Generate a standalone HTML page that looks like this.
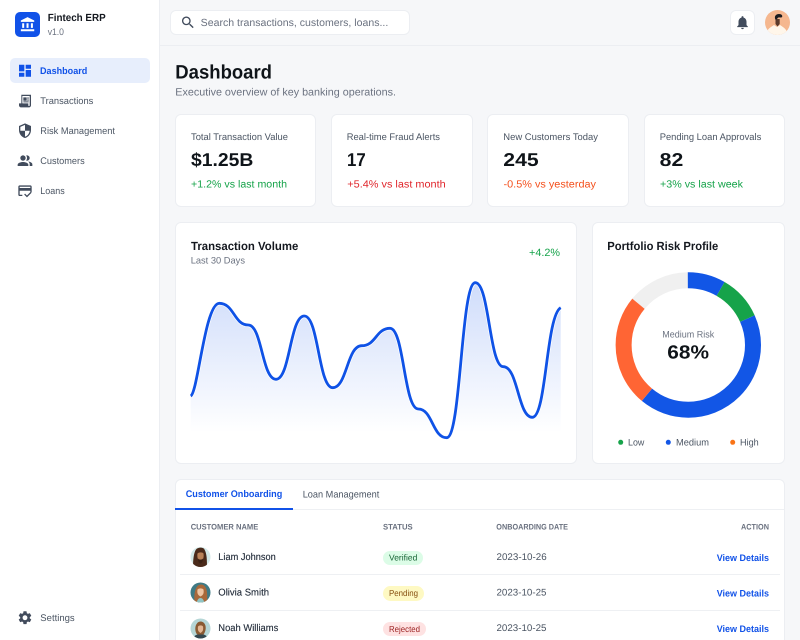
<!DOCTYPE html>
<html lang="en"><head><meta charset="utf-8"><title>Fintech ERP Dashboard</title>
<style>
html,body{margin:0;padding:0;width:800px;height:640px;overflow:hidden;background:#f6f7f9;font-family:"Liberation Sans",sans-serif}
#app{position:relative;width:800px;height:640px;overflow:hidden;background:#f6f7f9}
.b{position:absolute;box-sizing:border-box;background:#fff;border:1px solid #eceef2;border-radius:6px}
svg{position:absolute;left:0;top:0}
text{font-family:"Liberation Sans",sans-serif;font-size:9.5px;fill:#4b5563;text-rendering:geometricPrecision}
.bd{font-weight:700}
.n{font-size:9.6px}
.l{font-size:9.6px;fill:#4b5563}
.v{font-size:18.6px;font-weight:700;fill:#0f1419}
.d{font-size:10.4px}
.g{fill:#16a34a}.r{fill:#e0262c}.o{fill:#f4511e}.bl{fill:#1152e8}
.h{font-size:11.8px;font-weight:700;fill:#14181f}
.th{font-size:8px;font-weight:700;fill:#6b7280}
.nm{fill:#1f2937;font-size:9.8px;stroke:#1f2937;stroke-width:.12}
.bg{font-size:8.6px}
.gr{fill:#6b7280}
.ic{fill:#414b5c}
</style></head><body>
<div id="app">
<div class="b" style="left:-2px;top:-2px;width:162px;height:644px;border-radius:0"></div>
<div style="position:absolute;left:160px;top:45px;width:640px;height:1px;background:#eceef2"></div>
<div style="position:absolute;left:10px;top:58px;width:139.5px;height:25px;border-radius:5px;background:#e7eefc"></div>
<div style="position:absolute;left:15px;top:12px;width:25px;height:25px;border-radius:5px;background:#1152e8"></div>
<div class="b" style="left:170px;top:10px;width:240px;height:25px"></div>
<div class="b" style="left:730px;top:10px;width:25px;height:25px"></div>
<div class="b" style="left:175px;top:114px;width:141px;height:93px"></div>
<div class="b" style="left:331px;top:114px;width:142px;height:93px"></div>
<div class="b" style="left:487px;top:114px;width:142px;height:93px"></div>
<div class="b" style="left:643.5px;top:114px;width:141.5px;height:93px"></div>
<div class="b" style="left:175px;top:222px;width:402px;height:242px"></div>
<div class="b" style="left:592px;top:222px;width:193px;height:242px"></div>
<div class="b" style="left:175px;top:479px;width:610px;height:170px"></div>
<div style="position:absolute;left:176px;top:508.5px;width:608px;height:1px;background:#eef0f3"></div>
<div style="position:absolute;left:175px;top:507.5px;width:118px;height:2px;background:#1152e8"></div>
<div style="position:absolute;left:180px;top:574px;width:600px;height:1px;background:#eef0f3"></div>
<div style="position:absolute;left:180px;top:610px;width:600px;height:1px;background:#eef0f3"></div>
<div style="position:absolute;left:382.5px;top:550.5px;width:40.5px;height:14.5px;border-radius:8px;background:#dcfce7"></div>
<div style="position:absolute;left:382.5px;top:586px;width:41px;height:14.5px;border-radius:8px;background:#fef9c3"></div>
<div style="position:absolute;left:382.5px;top:621.5px;width:43.5px;height:14.5px;border-radius:8px;background:#fee2e2"></div>

<svg width="800" height="640" viewBox="0 0 800 640">
<defs>
<linearGradient id="fg" gradientUnits="userSpaceOnUse" x1="0" y1="283" x2="0" y2="433"><stop offset="0" stop-color="#1152e8" stop-opacity=".2"/><stop offset="1" stop-color="#1152e8" stop-opacity="0"/></linearGradient>
<clipPath id="c1"><circle cx="200.5" cy="557" r="10"/></clipPath>
<clipPath id="c2"><circle cx="200.5" cy="592.5" r="10"/></clipPath>
<clipPath id="c3"><circle cx="200.5" cy="628.5" r="10"/></clipPath>
<clipPath id="c4"><circle cx="777.5" cy="22.5" r="12.5"/></clipPath>
</defs>

<!-- sidebar -->
<g transform="translate(19.5,16.5)" fill="#fff"><path d="M4 10h3v7H4zM10.5 10h3v7h-3zM2 19h20v3H2zM17 10h3v7h-3zM12 1 2 6v2h20V6z" transform="scale(.67)"/></g>
<text x="47.7" y="20.8" class="bd" style="font-size:10.4px;fill:#14181f" lengthAdjust="spacingAndGlyphs" textLength="58">Fintech ERP</text>
<text x="47.7" y="35" class="gr" lengthAdjust="spacingAndGlyphs" textLength="16.3">v1.0</text>

<g transform="translate(17,62.7) scale(.667)" fill="#1152e8"><path d="M3 13h8V3H3v10zm0 8h8v-6H3v6zm10 0h8V11h-8v10zm0-18v6h8V3h-8z"/></g>
<g transform="translate(17,92.7) scale(.667)" class="ic"><path d="M19.5 3H6.5v13H3v3c0 1.66 1.34 3 3 3h12c1.66 0 3-1.34 3-3V3zM19 19c0 .55-.45 1-1 1s-1-.45-1-1v-3H8V5h11v14zM9.5 7h5v5h-5zM15.5 7h2v2h-2zM15.5 10h2v2h-2zM9.5 13h8v1.5h-8z"/></g>
<g transform="translate(17,122.7) scale(.667)" class="ic"><path d="M12 1 3 5v6c0 5.55 3.84 10.74 9 12 5.16-1.26 9-6.45 9-12V5l-9-4zm0 10.99h7c-.53 4.12-3.28 7.79-7 8.94V12H5V6.3l7-3.11v8.8z"/></g>
<g transform="translate(17,152.7) scale(.667)" class="ic"><path d="M16.67 13.13C18.04 14.06 19 15.32 19 17v3h4v-3c0-2.18-3.57-3.47-6.33-3.87zM15 12c2.21 0 4-1.79 4-4s-1.79-4-4-4c-.47 0-.91.1-1.33.26C14.5 5.3 15 6.6 15 8s-.5 2.7-1.33 3.74c.42.16.86.26 1.33.26zM9 12c2.21 0 4-1.79 4-4s-1.79-4-4-4-4 1.79-4 4 1.79 4 4 4zm0 2c-2.67 0-8 1.34-8 4v2h16v-2c0-2.66-5.33-4-8-4z"/></g>
<g transform="translate(17,182.7) scale(.667)" class="ic"><path d="M20 4H4c-1.11 0-2 .89-2 2v12c0 1.11.89 2 2 2h4v-2H4v-6h16v2h2V6c0-1.11-.89-2-2-2zm0 4H4V6h16v2zm-5.07 11.17-2.83-2.83-1.41 1.41L14.93 22 22 14.93l-1.41-1.41-5.66 5.65z"/></g>
<g transform="translate(17,609.7) scale(.667)" class="ic"><path d="M19.14 12.94c.04-.3.06-.61.06-.94 0-.32-.02-.64-.07-.94l2.03-1.58c.18-.14.23-.41.12-.61l-1.92-3.32c-.12-.22-.37-.29-.59-.22l-2.39.96c-.5-.38-1.03-.7-1.62-.94l-.36-2.54c-.04-.24-.24-.41-.48-.41h-3.84c-.24 0-.43.17-.47.41l-.36 2.54c-.59.24-1.13.57-1.62.94l-2.39-.96c-.22-.08-.47 0-.59.22L2.74 8.87c-.12.21-.08.47.12.61l2.03 1.58c-.05.3-.09.63-.09.94s.02.64.07.94l-2.03 1.58c-.18.14-.23.41-.12.61l1.92 3.32c.12.22.37.29.59.22l2.39-.96c.5.38 1.03.7 1.62.94l.36 2.54c.05.24.24.41.48.41h3.84c.24 0 .44-.17.47-.41l.36-2.54c.59-.24 1.13-.56 1.62-.94l2.39.96c.22.08.47 0 .59-.22l1.92-3.32c.12-.22.07-.47-.12-.61l-2.01-1.58zM12 15.6c-1.98 0-3.6-1.62-3.6-3.6s1.62-3.6 3.6-3.6 3.6 1.62 3.6 3.6-1.62 3.6-3.6 3.6z"/></g>
<text x="40" y="74" class="n bd bl" lengthAdjust="spacingAndGlyphs" textLength="47.3">Dashboard</text>
<text x="40.3" y="104" class="n" lengthAdjust="spacingAndGlyphs" textLength="53">Transactions</text>
<text x="40.3" y="134" class="n" lengthAdjust="spacingAndGlyphs" textLength="74.7">Risk Management</text>
<text x="40.3" y="164" class="n" lengthAdjust="spacingAndGlyphs" textLength="44.4">Customers</text>
<text x="40.3" y="194" class="n" lengthAdjust="spacingAndGlyphs" textLength="24.4">Loans</text>
<text x="40.3" y="621" class="n" lengthAdjust="spacingAndGlyphs" textLength="34.4">Settings</text>

<!-- header -->
<g transform="translate(180,14.5) scale(.667)" class="ic"><path d="M15.5 14h-.79l-.28-.27C15.41 12.59 16 11.11 16 9.5 16 5.91 13.09 3 9.5 3S3 5.91 3 9.5 5.91 16 9.5 16c1.61 0 3.09-.59 4.23-1.57l.27.28v.79l5 4.99L20.49 19l-4.99-5zm-6 0C7.01 14 5 11.99 5 9.5S7.01 5 9.5 5 14 7.01 14 9.5 11.99 14 9.5 14z"/></g>
<text x="200.7" y="26" class="gr" style="font-size:10.4px" lengthAdjust="spacingAndGlyphs" textLength="187.6">Search transactions, customers, loans...</text>
<g transform="translate(734.5,14.5) scale(.667)" class="ic"><path d="M12 22c1.1 0 2-.9 2-2h-4c0 1.1.89 2 2 2zm6-6v-5c0-3.07-1.64-5.64-4.5-6.32V4c0-.83-.67-1.5-1.5-1.5s-1.5.67-1.5 1.5v.68C7.63 5.36 6 7.92 6 11v5l-2 2v1h16v-1l-2-2z"/></g>
<circle cx="777.5" cy="22.5" r="12.5" fill="#f5b78f"/>
<g clip-path="url(#c4)">
<path d="M766 35c.5-6 5-8 8-10l3 2 3-2c3 2 7 4 8 10z" fill="#fff6ea"/>
<path d="M775.5 19h4.2v5l-2.200 2.500-2-2.500z" fill="#5b3a2c"/>
<path d="M775.300 19.500c-1.300-3.500.7-5.500 3.700-5.500 2.800 0 3.800 1.500 3 3.300-2 .5-2.500-.3-3.500.2-1.500.6-1 2.300-3.200 2z" fill="#1b1b1f"/>
</g>

<!-- title -->
<text x="175.3" y="78.7" class="bd" style="font-size:19.5px;fill:#0f1419" lengthAdjust="spacingAndGlyphs" textLength="96.7">Dashboard</text>
<text x="175.3" y="95.7" class="gr" style="font-size:10.6px" lengthAdjust="spacingAndGlyphs" textLength="220.7">Executive overview of key banking operations.</text>

<!-- stat cards -->
<text x="191" y="140" class="l" lengthAdjust="spacingAndGlyphs" textLength="97">Total Transaction Value</text>
<text x="346.7" y="140" class="l" lengthAdjust="spacingAndGlyphs" textLength="93.3">Real-time Fraud Alerts</text>
<text x="503.3" y="140" class="l" lengthAdjust="spacingAndGlyphs" textLength="94.7">New Customers Today</text>
<text x="659.7" y="140" class="l" lengthAdjust="spacingAndGlyphs" textLength="101.6">Pending Loan Approvals</text>
<text x="191" y="166" class="v" lengthAdjust="spacingAndGlyphs" textLength="62.3">$1.25B</text>
<text x="347" y="166" class="v" lengthAdjust="spacingAndGlyphs" textLength="18.7">17</text>
<text x="503.3" y="166" class="v" lengthAdjust="spacingAndGlyphs" textLength="35.4">245</text>
<text x="659.7" y="166" class="v" lengthAdjust="spacingAndGlyphs" textLength="23.6">82</text>
<text x="191" y="187.3" class="d g" lengthAdjust="spacingAndGlyphs" textLength="96">+1.2% vs last month</text>
<text x="347.3" y="187.3" class="d r" lengthAdjust="spacingAndGlyphs" textLength="98.4">+5.4% vs last month</text>
<text x="503.5" y="187.3" class="d o" lengthAdjust="spacingAndGlyphs" textLength="92.5">-0.5% vs yesterday</text>
<text x="660" y="187.3" class="d g" lengthAdjust="spacingAndGlyphs" textLength="83">+3% vs last week</text>

<!-- chart -->
<text x="191" y="250" class="h" lengthAdjust="spacingAndGlyphs" textLength="107.3">Transaction Volume</text>
<text x="190.7" y="263.7" class="gr" style="font-size:9.4px" lengthAdjust="spacingAndGlyphs" textLength="54.3">Last 30 Days</text>
<text x="529" y="256" class="g" style="font-size:10.6px" lengthAdjust="spacingAndGlyphs" textLength="31">+4.2%</text>
<path d="M190.7 396C198 392 205 303.3 219.3 303.3C234 303.3 234 325 248.3 325C262 325 262 379.3 276 379.3C290 379.3 290 316 304.3 316C318.500 316 318.500 387.7 332.7 387.7C347 387.7 347 345.7 361.7 345.7C376 345.7 376 328.3 390 328.3C404 328.3 404 409 418.3 409C432.500 409 432.500 437.7 446.7 437.7C461 437.7 461 282.7 475.3 282.7C489.3 282.7 489.3 366.7 503.3 366.7C518 366.7 518 417.3 532.3 417.3C546.500 417.3 546 316 560.7 307.7V433H190.7Z" fill="url(#fg)"/>
<path d="M190.7 396C198 392 205 303.3 219.3 303.3C234 303.3 234 325 248.3 325C262 325 262 379.3 276 379.3C290 379.3 290 316 304.3 316C318.500 316 318.500 387.7 332.7 387.7C347 387.7 347 345.7 361.7 345.7C376 345.7 376 328.3 390 328.3C404 328.3 404 409 418.3 409C432.500 409 432.500 437.7 446.7 437.7C461 437.7 461 282.7 475.3 282.7C489.3 282.7 489.3 366.7 503.3 366.7C518 366.7 518 417.3 532.3 417.3C546.500 417.3 546 316 560.7 307.7" fill="none" stroke="#fff" stroke-width="4.2"/>
<path d="M190.7 396C198 392 205 303.3 219.3 303.3C234 303.3 234 325 248.3 325C262 325 262 379.3 276 379.3C290 379.3 290 316 304.3 316C318.500 316 318.500 387.7 332.7 387.7C347 387.7 347 345.7 361.7 345.7C376 345.7 376 328.3 390 328.3C404 328.3 404 409 418.3 409C432.500 409 432.500 437.7 446.7 437.7C461 437.7 461 282.7 475.3 282.7C489.3 282.7 489.3 366.7 503.3 366.7C518 366.7 518 417.3 532.3 417.3C546.500 417.3 546 316 560.7 307.7" fill="none" stroke="#0f52e6" stroke-width="2.8"/>

<!-- donut -->
<text x="607.3" y="250" class="h" lengthAdjust="spacingAndGlyphs" textLength="111">Portfolio Risk Profile</text>
<g transform="rotate(-90 688.3 345)" fill="none" stroke-width="16">
<circle cx="688.3" cy="345" r="64.7" pathLength="360" stroke="#f0f0f0" stroke-dasharray="50 310" stroke-dashoffset="-310"/>
<circle cx="688.3" cy="345" r="64.7" pathLength="360" stroke="#1256e6" stroke-dasharray="30 330"/>
<circle cx="688.3" cy="345" r="64.7" pathLength="360" stroke="#16a34a" stroke-dasharray="36 324" stroke-dashoffset="-30"/>
<circle cx="688.3" cy="345" r="64.7" pathLength="360" stroke="#1256e6" stroke-dasharray="154 206" stroke-dashoffset="-66"/>
<circle cx="688.3" cy="345" r="64.7" pathLength="360" stroke="#ff6534" stroke-dasharray="90 270" stroke-dashoffset="-220"/>
</g>
<text x="662.3" y="337.3" class="gr" lengthAdjust="spacingAndGlyphs" textLength="52">Medium Risk</text>
<text x="667.3" y="358.3" class="bd" style="font-size:19px;fill:#0f1419" lengthAdjust="spacingAndGlyphs" textLength="41.7">68%</text>
<circle cx="620.7" cy="442.3" r="2.5" fill="#16a34a"/><text x="628" y="445.7" lengthAdjust="spacingAndGlyphs" textLength="16.3">Low</text>
<circle cx="668.3" cy="442.3" r="2.5" fill="#1256e6"/><text x="676" y="445.7" lengthAdjust="spacingAndGlyphs" textLength="33">Medium</text>
<circle cx="732.7" cy="442.3" r="2.5" fill="#f97316"/><text x="740" y="445.7" lengthAdjust="spacingAndGlyphs" textLength="18.7">High</text>

<!-- table -->
<text x="185.7" y="497" class="bd bl" style="font-size:9.6px" lengthAdjust="spacingAndGlyphs" textLength="96.6">Customer Onboarding</text>
<text x="302.7" y="497.7" style="font-size:9.7px" lengthAdjust="spacingAndGlyphs" textLength="76.6">Loan Management</text>
<text x="190.7" y="529.3" class="th" lengthAdjust="spacingAndGlyphs" textLength="67.6">CUSTOMER NAME</text>
<text x="383" y="529.3" class="th" lengthAdjust="spacingAndGlyphs" textLength="29.7">STATUS</text>
<text x="496.3" y="529.3" class="th" lengthAdjust="spacingAndGlyphs" textLength="71.7">ONBOARDING DATE</text>
<text x="741" y="529.3" class="th" lengthAdjust="spacingAndGlyphs" textLength="28">ACTION</text>

<g clip-path="url(#c1)">
<rect x="190" y="546" width="21" height="22" fill="#d4e9e8"/>
<path d="M193 568c0-7 .500-15 3-18.500 2-2.500 7.500-2.500 8.500 0 2.500 4 2.500 12 2.500 18.500z" fill="#4a2a1a"/>
<path d="M197.5 553.500c1.500-1.500 5-1.500 6 0 .5 3.500 0 6.500-3 8-3-1.500-3.500-4.500-3-8z" fill="#b98258"/>
<path d="M198 558.500c1 1.500 4 1.500 5 0 0 3-1 4.500-2.500 5-1.500-.5-2.500-2-2.500-5z" fill="#3a2114"/>
</g>
<g clip-path="url(#c2)">
<rect x="190" y="582" width="21" height="22" fill="#3f7a85"/>
<path d="M194.500 603c-.5-7 0-14 3-17 2-2 5.500-2 7 0 3 3 3 10 2.500 17z" fill="#a8683a"/>
<path d="M197.500 589.500c1.500-1.500 4.500-1.500 6 0 .5 3.500 0 5.500-3 7-3-1.500-3.500-3.500-3-7z" fill="#eec5a3"/>
<path d="M196.500 604c.5-4 2-6 4-6s3.500 2 4 6z" fill="#8fc4c4"/>
</g>
<g clip-path="url(#c3)">
<rect x="190" y="618" width="21" height="22" fill="#b5d6d6"/>
<path d="M193 640c0-4 3.500-6 7.500-6s7.500 2 7.500 6z" fill="#33474f"/>
<path d="M195.500 631c-1-5 1.500-9.500 5-9.500s6 3.500 5 8.500c-.5 2-1 3-2 4.500h-6c-1-.5-1.500-1.500-2-3.500z" fill="#8a5a32"/>
<path d="M198 626.500c1.500-1.500 4-1.500 5 0 .5 3 0 5-2.500 6.500-2.500-1.500-3-3.500-2.500-6.500z" fill="#e3b693"/>
</g>
<text x="218.3" y="560" class="nm" lengthAdjust="spacingAndGlyphs" textLength="57.4">Liam Johnson</text>
<text x="218.3" y="595.7" class="nm" lengthAdjust="spacingAndGlyphs" textLength="50.7">Olivia Smith</text>
<text x="218.3" y="631" class="nm" lengthAdjust="spacingAndGlyphs" textLength="60">Noah Williams</text>
<text x="389" y="560.7" class="bg" style="fill:#166534" lengthAdjust="spacingAndGlyphs" textLength="28.3">Verified</text>
<text x="389" y="596.2" class="bg" style="fill:#854d0e" lengthAdjust="spacingAndGlyphs" textLength="29">Pending</text>
<text x="389" y="632" class="bg" style="fill:#991b1b" lengthAdjust="spacingAndGlyphs" textLength="31">Rejected</text>
<text x="496.5" y="560" style="font-size:9.6px" lengthAdjust="spacingAndGlyphs" textLength="50.2">2023-10-26</text>
<text x="496.5" y="595.7" style="font-size:9.6px" lengthAdjust="spacingAndGlyphs" textLength="50">2023-10-25</text>
<text x="496.5" y="631" style="font-size:9.6px" lengthAdjust="spacingAndGlyphs" textLength="50">2023-10-25</text>
<text x="716.7" y="561" class="bd bl" lengthAdjust="spacingAndGlyphs" textLength="52.3">View Details</text>
<text x="716.7" y="596.7" class="bd bl" lengthAdjust="spacingAndGlyphs" textLength="52.3">View Details</text>
<text x="716.7" y="632" class="bd bl" lengthAdjust="spacingAndGlyphs" textLength="52.3">View Details</text>
</svg>
</div>
</body></html>
